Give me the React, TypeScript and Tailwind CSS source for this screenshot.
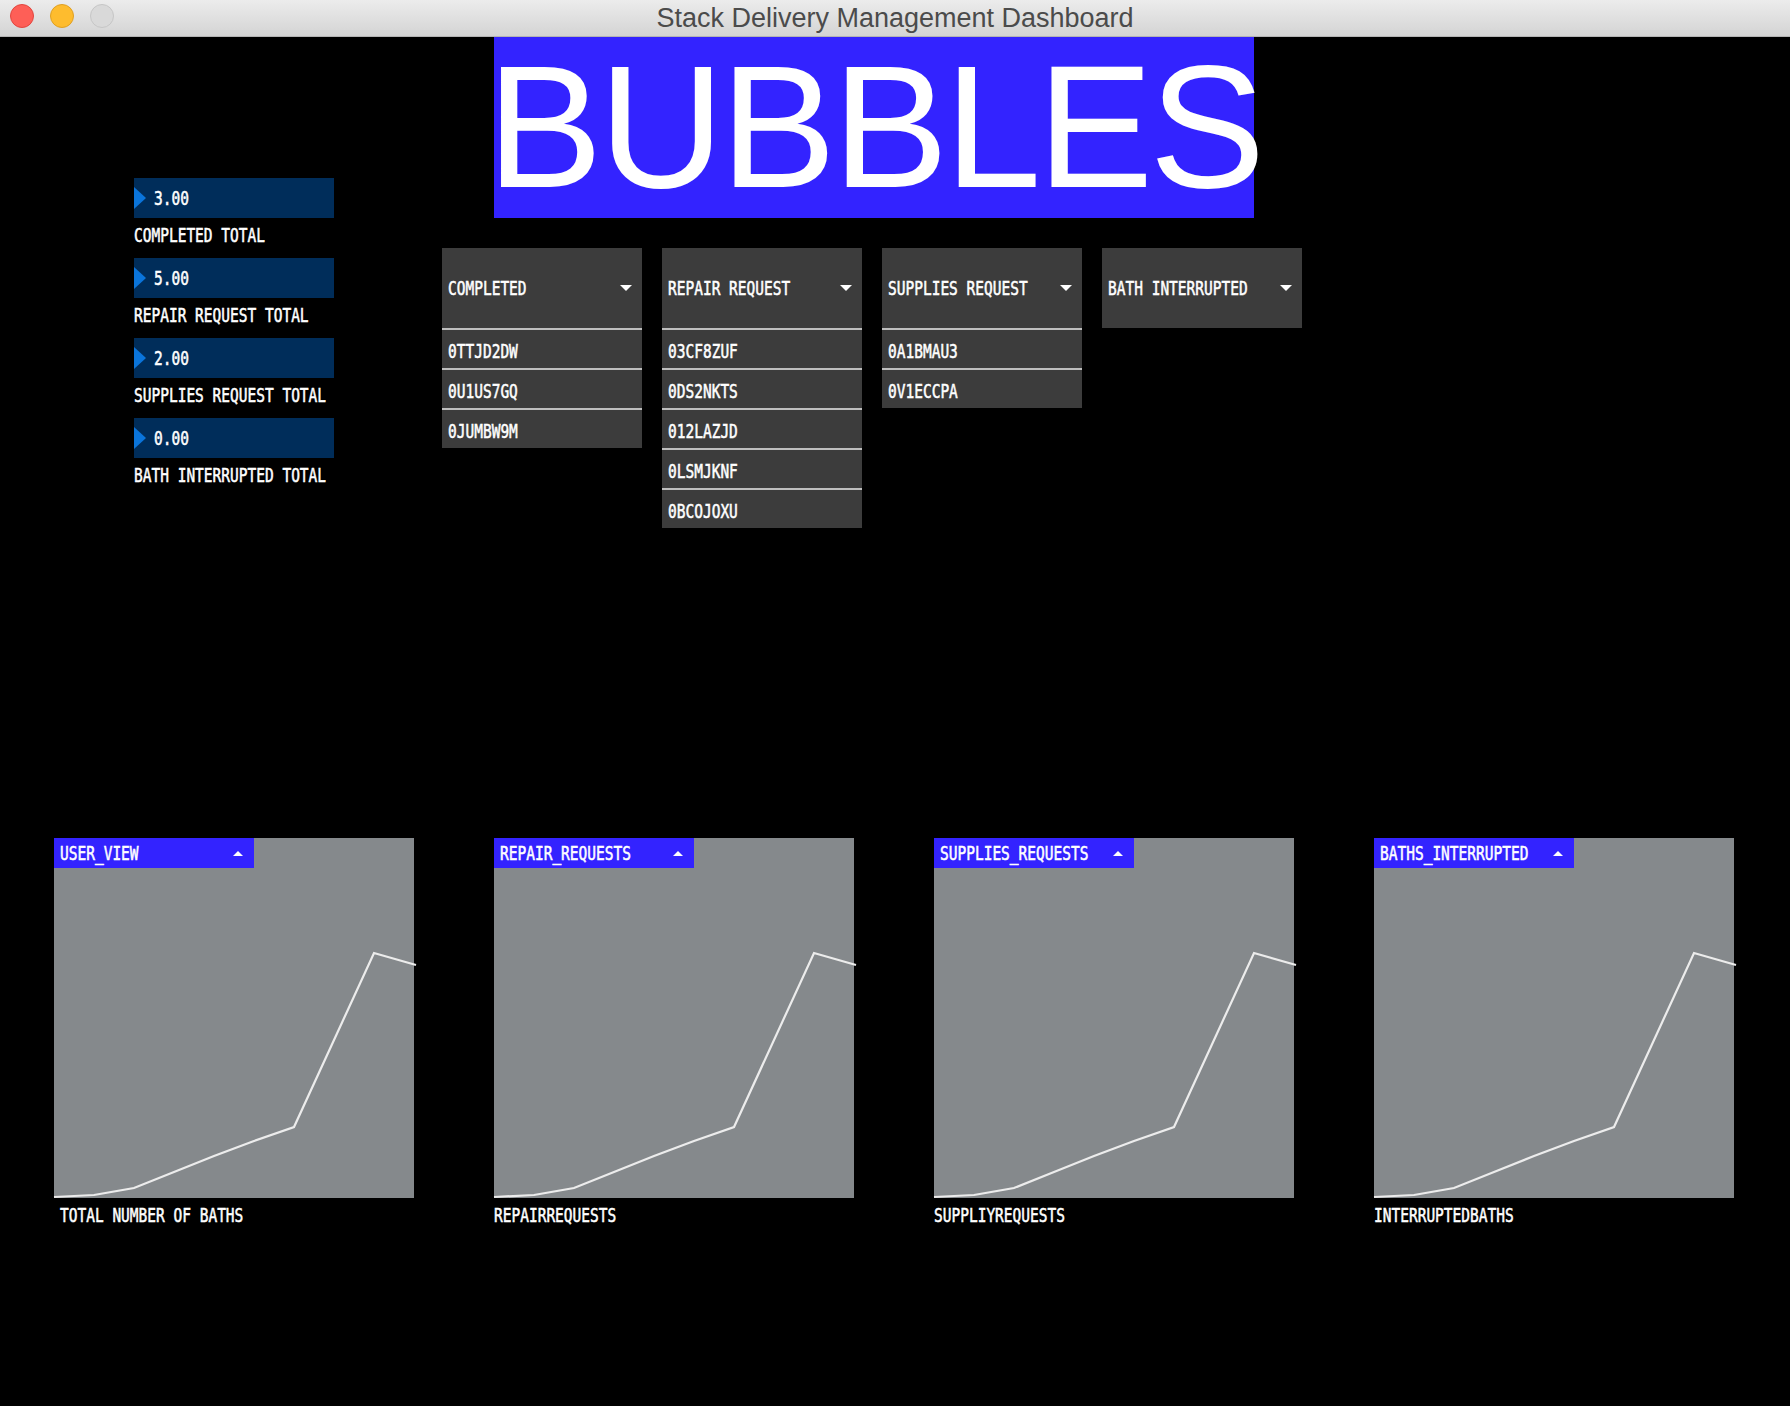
import React from "react";

const totals = [
  { value: "3.00", label: "COMPLETED TOTAL" },
  { value: "5.00", label: "REPAIR REQUEST TOTAL" },
  { value: "2.00", label: "SUPPLIES REQUEST TOTAL" },
  { value: "0.00", label: "BATH INTERRUPTED TOTAL" },
];

const lists = [
  { title: "COMPLETED", items: ["0TTJD2DW", "0U1US7GQ", "0JUMBW9M"] },
  { title: "REPAIR REQUEST", items: ["03CF8ZUF", "0DS2NKTS", "012LAZJD", "0LSMJKNF", "0BCOJOXU"] },
  { title: "SUPPLIES REQUEST", items: ["0A1BMAU3", "0V1ECCPA"] },
  { title: "BATH INTERRUPTED", items: [] as string[] },
];

const charts = [
  { head: "USER_VIEW", caption: "TOTAL NUMBER OF BATHS", inset: true },
  { head: "REPAIR_REQUESTS", caption: "REPAIRREQUESTS", inset: false },
  { head: "SUPPLIES_REQUESTS", caption: "SUPPLIYREQUESTS", inset: false },
  { head: "BATHS_INTERRUPTED", caption: "INTERRUPTEDBATHS", inset: false },
];

const linePoints = "0,359 40,357 80,350 120,334 160,318 200,303 240,289 320,115 362,127";

// pixel-ish label text used by all the controls
function Px({ children }: { children: React.ReactNode }) {
  return (
    <span className="inline-block origin-center scale-y-[1.3] font-['DejaVu_Sans_Mono',monospace] text-[14.5px] font-normal leading-5 text-white whitespace-pre [-webkit-text-stroke:0.4px_white]">
      {children}
    </span>
  );
}

function Arrow() {
  return (
    <svg width="12" height="6" viewBox="0 0 12 6" className="shrink-0">
      <polygon points="0,0 12,0 6,6" fill="#fff" />
    </svg>
  );
}

function TitleBar() {
  return (
    <div className="grid h-[37px] grid-cols-[1fr_auto_1fr] border-b border-[#b4b4b4] bg-gradient-to-b from-[#ececec] to-[#d4d4d4]">
      <div className="flex items-start gap-4 pl-[10px] pt-[4px]">
        <div className="h-6 w-6 rounded-full border border-[#e2463f] bg-[#fe5f57]" />
        <div className="h-6 w-6 rounded-full border border-[#dfa023] bg-[#febc2e]" />
        <div className="h-6 w-6 rounded-full border border-[#c6c6c6] bg-[#d9d9d9]" />
      </div>
      <div className="font-['Liberation_Sans',Arial,sans-serif] text-[27px] leading-[36px] text-[#4b4b4b]">
        Stack Delivery Management Dashboard
      </div>
      <div />
    </div>
  );
}

function NumberBox({ value, label }: { value: string; label: string }) {
  return (
    <div className="flex h-20 flex-col">
      <div className="flex h-10 w-[200px] items-center gap-2 bg-[#002d5a]">
        <svg width="12" height="22" viewBox="0 0 12 22" className="shrink-0">
          <polygon points="0,0 12,11 0,22" fill="#0a74da" />
        </svg>
        <Px>{value}</Px>
      </div>
      <div className="pt-[4px]">
        <Px>{label}</Px>
      </div>
    </div>
  );
}

function Dropdown({ title, items }: { title: string; items: string[] }) {
  return (
    <div className="flex w-[200px] flex-col bg-[#3c3c3c]">
      <div className="flex h-20 items-center justify-between pl-[6px] pr-[10px]">
        <Px>{title}</Px>
        <Arrow />
      </div>
      {items.map((it) => (
        <div key={it} className="flex h-10 items-center border-t-2 border-[#bebebe] pl-[6px] pt-[3px]">
          <Px>{it}</Px>
        </div>
      ))}
    </div>
  );
}

function Chart({ head, caption, inset }: { head: string; caption: string; inset: boolean }) {
  return (
    <div className="flex w-[360px] flex-col">
      <div className="relative h-[360px] bg-[#85898c]">
        <div className="flex h-[30px] w-[200px] items-center justify-between bg-[#3323ff] pl-[6px] pr-[11px]">
          <Px>{head}</Px>
          <svg width="10" height="5" viewBox="0 0 10 5" className="shrink-0">
            <polygon points="5,0 10,5 0,5" fill="#fff" />
          </svg>
        </div>
        <svg width="360" height="360" viewBox="0 0 360 360" className="absolute left-0 top-0 overflow-visible">
          <polyline points={linePoints} fill="none" stroke="#ececec" strokeWidth="2.2" strokeLinejoin="miter" />
        </svg>
      </div>
      <div className={inset ? "pl-[6px] pt-[4px]" : "pt-[4px]"}>
        <Px>{caption}</Px>
      </div>
    </div>
  );
}

export default function App() {
  return (
    <div className="flex h-[1406px] w-[1790px] flex-col overflow-hidden bg-black">
      <TitleBar />
      <div className="flex h-[801px] items-start">
        <div className="ml-[134px] mt-[141px] flex w-[200px] flex-col">
          {totals.map((t) => (
            <NumberBox key={t.label} value={t.value} label={t.label} />
          ))}
        </div>
        <div className="ml-[108px] flex flex-col">
          <div className="ml-[52px] flex h-[181px] w-[760px] justify-center bg-[#3323ff] pt-[3px]">
            <span className="whitespace-nowrap font-['Liberation_Sans',Arial,sans-serif] text-[174px] leading-[174px] tracking-[-4px] text-white">
              BUBBLES
            </span>
          </div>
          <div className="mt-[30px] flex items-start gap-5">
            {lists.map((l) => (
              <Dropdown key={l.title} title={l.title} items={l.items} />
            ))}
          </div>
        </div>
      </div>
      <div className="flex gap-20 pl-[54px]">
        {charts.map((c) => (
          <Chart key={c.head} head={c.head} caption={c.caption} inset={c.inset} />
        ))}
      </div>
    </div>
  );
}
